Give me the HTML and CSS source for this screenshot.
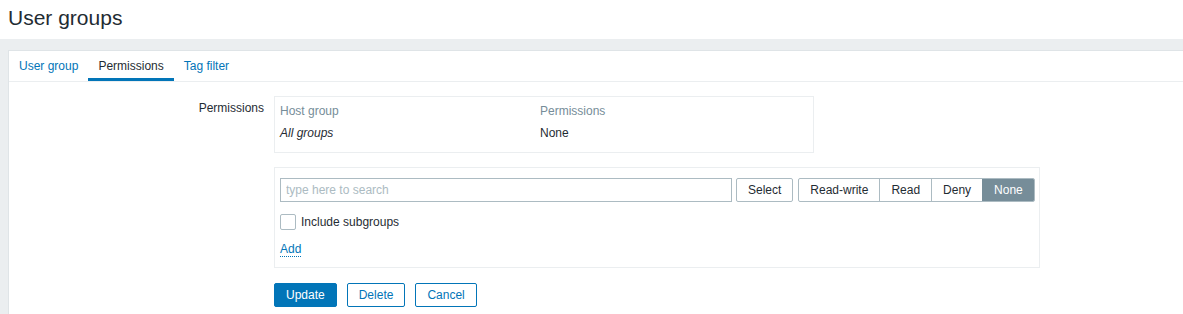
FILE: index.html
```html
<!DOCTYPE html>
<html lang="en">

<head>
    <meta charset="UTF-8">
    <meta name="viewport" content="width=device-width, initial-scale=1.0">
    <title>User groups</title>
    <link rel="stylesheet" href="styles.css">
</head>

<body>
    <header class="page-header">
        <h1 class="page-title">User groups</h1>
    </header>

    <main class="page-content">
        <div class="card">
            <ul class="tabs">
                <li><a class="tab" href="#">User group</a></li>
                <li><a class="tab tab-active" href="#">Permissions</a></li>
                <li><a class="tab" href="#">Tag filter</a></li>
            </ul>

            <form class="form-list">
                <div class="form-label">Permissions</div>
                <div class="form-field">
                    <!-- current permissions -->
                    <div class="perm-table">
                        <div class="perm-row perm-head">
                            <span class="perm-col">Host group</span>
                            <span>Permissions</span>
                        </div>
                        <div class="perm-row">
                            <span class="perm-col italic">All groups</span>
                            <span>None</span>
                        </div>
                    </div>

                    <!-- add permission -->
                    <div class="perm-add">
                        <div class="perm-line">
                            <input type="text" class="search-input" placeholder="type here to search">
                            <button type="button" class="btn-grey">Select</button>
                            <div class="segmented">
                                <span class="seg">Read-write</span>
                                <span class="seg">Read</span>
                                <span class="seg">Deny</span>
                                <span class="seg seg-on">None</span>
                            </div>
                        </div>
                        <label class="check-line">
                            <span class="checkbox"></span>
                            Include subgroups
                        </label>
                        <a href="#" class="link-dotted">Add</a>
                    </div>

                    <div class="form-buttons">
                        <button type="button" class="btn btn-main">Update</button>
                        <button type="button" class="btn btn-alt">Delete</button>
                        <button type="button" class="btn btn-alt">Cancel</button>
                    </div>
                </div>
            </form>
        </div>
    </main>
</body>

</html>
```

FILE: styles.css
```css
html,
body {
    height: 100%;
}

body {
    margin: 0;
    font-family: "Liberation Sans", Arial, sans-serif;
    font-size: 12px;
    color: #1f2c33;
    background: #ebeef0;
}

.page-header {
    background: #fff;
    height: 39px;
    padding: 6px 8px 0;
    box-sizing: border-box;
}

.page-title {
    margin: 0;
    font-size: 21px;
    font-weight: normal;
    line-height: 24px;
    color: #1f2c33;
}

.page-content {
    padding: 11px 0 0 8px;
}

.card {
    background: #fff;
    border: 1px solid #dfe4e7;
    border-right: 0;
    min-height: 300px;
}

.tabs {
    display: flex;
    list-style: none;
    margin: 0;
    padding: 0;
    height: 30px;
    border-bottom: 1px solid #ebeef0;
}

.tab {
    display: block;
    padding: 0 10px;
    line-height: 30px;
    height: 27px;
    color: #0275b8;
    text-decoration: none;
    border-bottom: 3px solid transparent;
}

.tab-active {
    color: #1f2c33;
    border-bottom-color: #0275b8;
}

.form-list {
    display: grid;
    grid-template-columns: 255px 1fr;
    column-gap: 10px;
    padding-top: 14px;
}

.form-label {
    text-align: right;
    line-height: 24px;
}

.perm-table {
    width: 540px;
    box-sizing: border-box;
    border: 1px solid #ebeef0;
    padding: 3px 5px 8px;
}

.perm-row {
    display: flex;
    line-height: 22px;
}

.perm-head {
    color: #768d99;
}

.perm-col {
    width: 260px;
}

.italic {
    font-style: italic;
}

.perm-add {
    width: 766px;
    box-sizing: border-box;
    border: 1px solid #ebeef0;
    margin-top: 14px;
    padding: 10px 5px 10px;
}

.perm-line {
    display: flex;
    align-items: center;
    white-space: nowrap;
}

.search-input {
    width: 452px;
    height: 24px;
    box-sizing: border-box;
    border: 1px solid #acbbc2;
    padding: 0 5px;
    font-family: inherit;
    font-size: 12px;
    color: #1f2c33;
    outline: none;
    flex-shrink: 0;
}

.search-input::placeholder {
    color: #acbbc2;
}

.btn-grey {
    height: 24px;
    margin-left: 4px;
    padding: 0 11px;
    border: 1px solid #acbbc2;
    border-radius: 2px;
    background: #fff;
    font-family: inherit;
    font-size: 12px;
    color: #1f2c33;
    flex-shrink: 0;
}

.segmented {
    display: flex;
    margin-left: 5px;
    border: 1px solid #acbbc2;
    border-radius: 2px;
    overflow: hidden;
    flex-shrink: 0;
}

.seg {
    padding: 0 11px;
    line-height: 22px;
    border-left: 1px solid #acbbc2;
}

.seg:first-child {
    border-left: 0;
}

.seg-on {
    background: #768d99;
    border-left-color: #768d99;
    color: #fff;
}

.check-line {
    display: flex;
    align-items: center;
    gap: 5px;
    margin-top: 12px;
    line-height: 16px;
}

.checkbox {
    width: 14px;
    height: 14px;
    border: 1px solid #acbbc2;
    border-radius: 2px;
}

.link-dotted {
    display: inline-block;
    margin-top: 12px;
    color: #0275b8;
    text-decoration: none;
    border-bottom: 1px dotted #0275b8;
    line-height: 14px;
}

.form-buttons {
    display: flex;
    gap: 10px;
    margin-top: 15px;
}

.btn {
    height: 24px;
    padding: 0 11px;
    border: 1px solid #0275b8;
    border-radius: 2px;
    font-family: inherit;
    font-size: 12px;
}

.btn-main {
    background: #0275b8;
    color: #fff;
}

.btn-alt {
    background: #fff;
    color: #0275b8;
}
```
